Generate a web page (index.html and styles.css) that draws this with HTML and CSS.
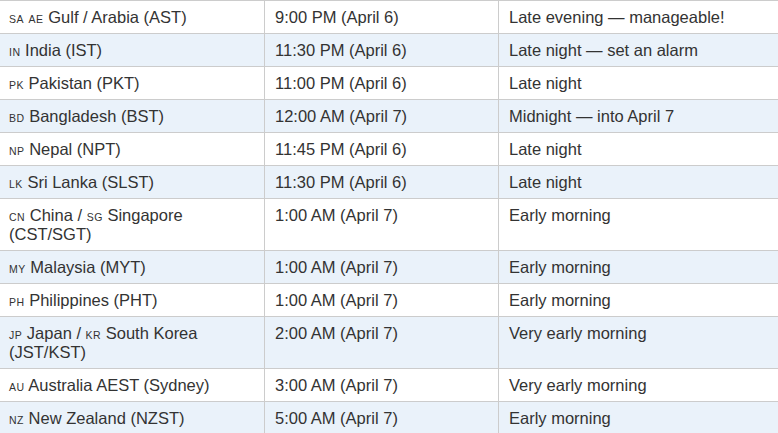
FILE: index.html
```html
<!DOCTYPE html>
<html>
<head>
<meta charset="utf-8">
<link rel="stylesheet" href="styles.css">
</head>
<body>
<table class="tz">
  <colgroup><col class="c1"><col class="c2"><col class="c3"></colgroup>
  <tbody>
    <tr><td><span class="flag">SA</span> <span class="flag">AE</span> Gulf / Arabia (AST)</td><td>9:00 PM (April 6)</td><td>Late evening — manageable!</td></tr>
    <tr><td><span class="flag">IN</span> India (IST)</td><td>11:30 PM (April 6)</td><td>Late night — set an alarm</td></tr>
    <tr><td><span class="flag">PK</span> Pakistan (PKT)</td><td>11:00 PM (April 6)</td><td>Late night</td></tr>
    <tr><td><span class="flag">BD</span> Bangladesh (BST)</td><td>12:00 AM (April 7)</td><td>Midnight — into April 7</td></tr>
    <tr><td><span class="flag">NP</span> Nepal (NPT)</td><td>11:45 PM (April 6)</td><td>Late night</td></tr>
    <tr><td><span class="flag">LK</span> Sri Lanka (SLST)</td><td>11:30 PM (April 6)</td><td>Late night</td></tr>
    <tr><td><span class="flag">CN</span> China / <span class="flag">SG</span> Singapore (CST/SGT)</td><td>1:00 AM (April 7)</td><td>Early morning</td></tr>
    <tr><td><span class="flag">MY</span> Malaysia (MYT)</td><td>1:00 AM (April 7)</td><td>Early morning</td></tr>
    <tr><td><span class="flag">PH</span> Philippines (PHT)</td><td>1:00 AM (April 7)</td><td>Early morning</td></tr>
    <tr><td><span class="flag">JP</span> Japan / <span class="flag">KR</span> South Korea (JST/KST)</td><td>2:00 AM (April 7)</td><td>Very early morning</td></tr>
    <tr><td><span class="flag">AU</span> Australia AEST (Sydney)</td><td>3:00 AM (April 7)</td><td>Very early morning</td></tr>
    <tr><td><span class="flag">NZ</span> New Zealand (NZST)</td><td>5:00 AM (April 7)</td><td>Early morning</td></tr>
  </tbody>
</table>
</body>
</html>
```
FILE: styles.css
```css
html, body {
  margin: 0;
  padding: 0;
  background: #ffffff;
}
body {
  font-family: "Liberation Sans", Arial, sans-serif;
  font-size: 16.5px;
  color: #333333;
  overflow: hidden;
}
.tz {
  border-collapse: collapse;
  table-layout: fixed;
  width: 784px;
  margin-left: -2px;
}
.c1 { width: 266px; }
.c2 { width: 234px; }
.c3 { width: 284px; }
.tz td {
  border: 1px solid #cccccc;
  padding: 7px 10px 6px 10px;
  line-height: 19px;
  vertical-align: top;
  text-align: left;
}
.tz tr:nth-child(even) td {
  background: #eaf2fa;
}
.flag {
  font-size: 10.5px;
  line-height: 1;
  letter-spacing: 0.5px;
  color: #333333;
}
```
